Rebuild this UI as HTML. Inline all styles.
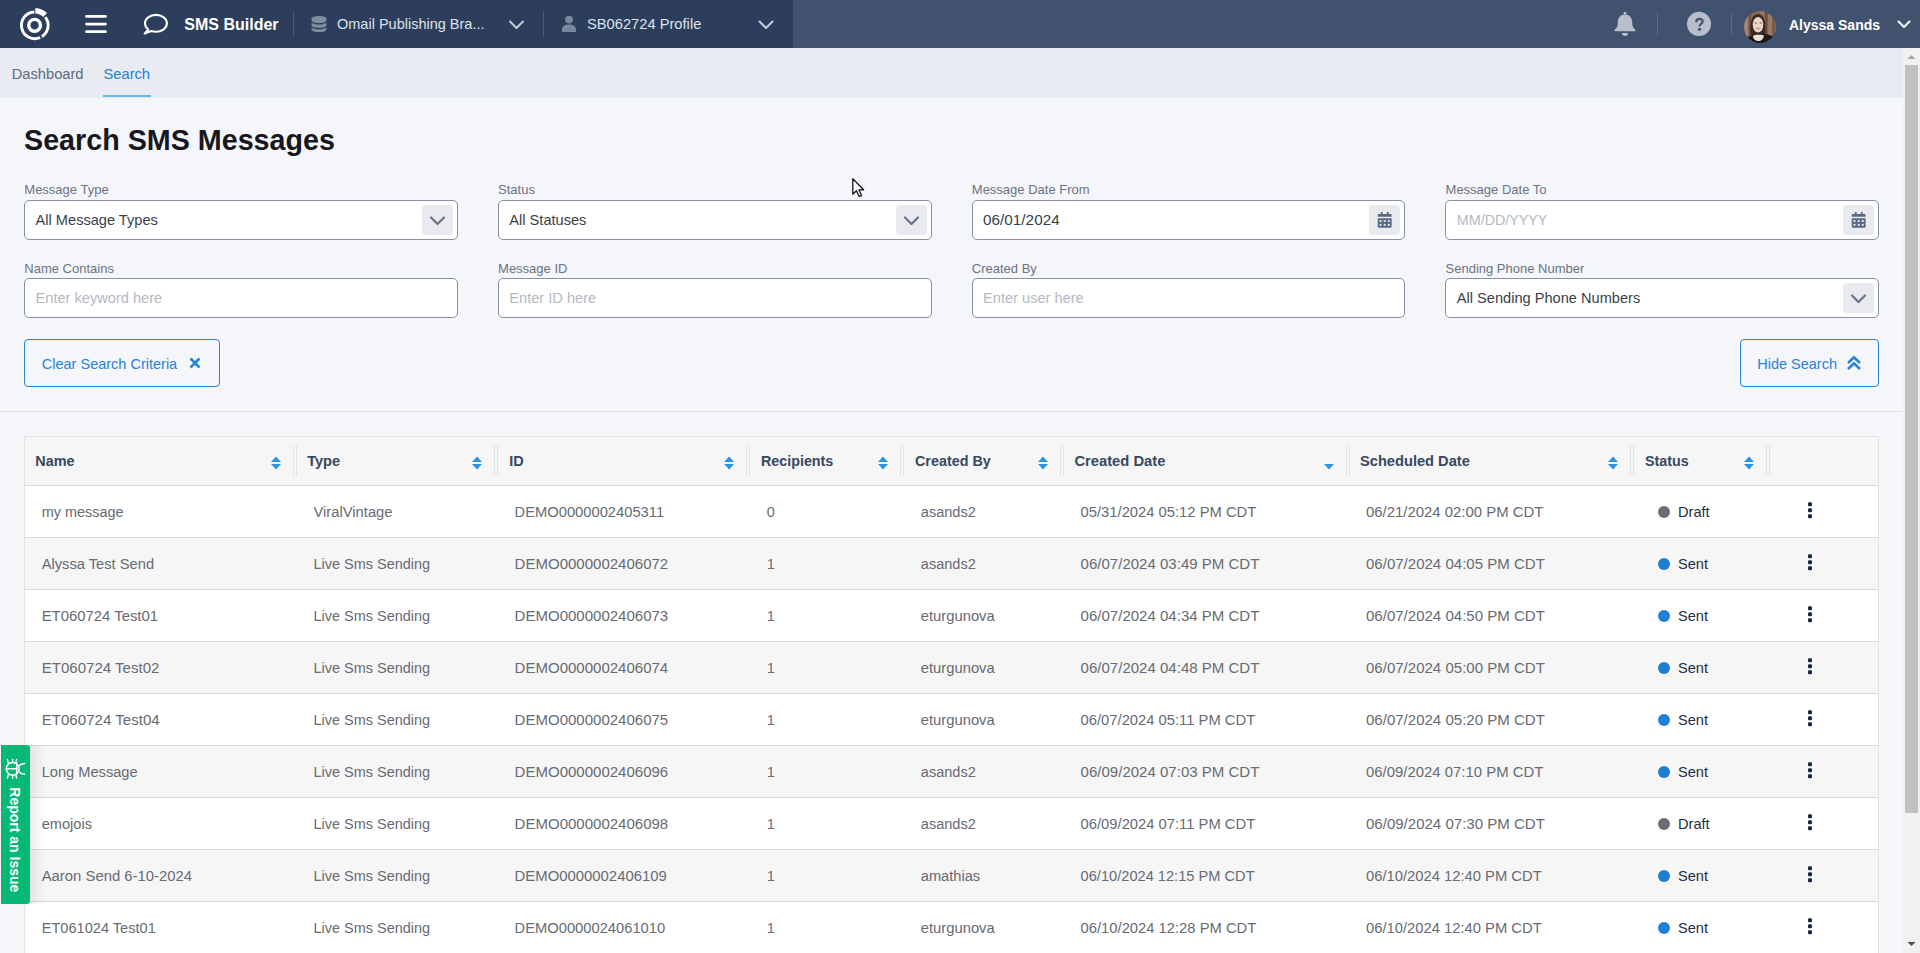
<!DOCTYPE html><html><head><meta charset="utf-8"><style>
*{box-sizing:border-box;margin:0;padding:0}
html,body{width:1920px;height:953px;overflow:hidden;background:#f5f6fa;font-family:"Liberation Sans",sans-serif}
.tx{position:absolute;white-space:nowrap;line-height:1}
.bx{position:absolute}
svg{position:absolute;overflow:visible}
</style></head><body>
<div class="bx" style="left:0;top:0;width:1920px;height:48px;background:#41526f"></div>
<div class="bx" style="left:0;top:0;width:793px;height:48px;background:#2c3e5c"></div>
<svg width="1920" height="48" style="left:0;top:0"><path d="M40.23,37.50 A13.35,13.35 0 1 1 34.33,11.96" stroke="#fff" stroke-width="2.9" fill="none"/><path d="M45.32,17.08 A13.35,13.35 0 0 1 41.87,36.62" stroke="#fff" stroke-width="2.9" fill="none"/><path d="M35.31,10.71 A14.6,14.6 0 0 1 45.12,14.98" stroke="#fff" stroke-width="5.4" fill="none"/><circle cx="34.599999999999994" cy="25.3" r="5.9" stroke="#fff" stroke-width="3.4" fill="none"/><g stroke="#fff" stroke-width="2.7" stroke-linecap="round"><line x1="86.5" y1="16.4" x2="105.5" y2="16.4"/><line x1="86.5" y1="24.1" x2="105.5" y2="24.1"/><line x1="86.5" y1="31.7" x2="105.5" y2="31.7"/></g><path d="M151.3,31.1 C152.7,31.6 154.2,31.8 155.95,31.8 C162,31.8 166.9,28.1 166.9,23.35 C166.9,18.6 162,14.9 155.95,14.9 C149.9,14.9 145,18.6 145,23.35 C145,25.8 146.2,27.9 148.2,29.5 L144.6,33.6 Z" stroke="#fff" stroke-width="2.1" fill="none" stroke-linejoin="round"/><rect x="293" y="12" width="1" height="24" fill="#4a5b77"/><rect x="543" y="12" width="1" height="24" fill="#4a5b77"/><rect x="1657" y="12" width="1" height="24" fill="#5a6a85"/><rect x="1731" y="12" width="1" height="24" fill="#5a6a85"/><g fill="#7f8ca2"><path d="M311.6,18.6 C311.6,16.9 314.9,16 319,16 C323.1,16 326.4,16.9 326.4,18.6 L326.4,20.6 C326.4,22.3 323.1,23.2 319,23.2 C314.9,23.2 311.6,22.3 311.6,20.6 Z"/><path d="M311.6,22.6 C313,24 316,24.6 319,24.6 C322,24.6 325,24 326.4,22.6 L326.4,25.3 C326.4,27 323.1,27.9 319,27.9 C314.9,27.9 311.6,27 311.6,25.3 Z"/><path d="M311.6,27.3 C313,28.7 316,29.3 319,29.3 C322,29.3 325,28.7 326.4,27.3 L326.4,29.4 C326.4,31.1 323.1,32 319,32 C314.9,32 311.6,31.1 311.6,29.4 Z"/></g><g fill="#7a879c"><circle cx="569" cy="19.6" r="3.9"/><path d="M562,32 L562,29.6 C562,26.4 564.8,24.6 569,24.6 C573.2,24.6 576,26.4 576,29.6 L576,32 Z"/></g><g stroke="#c5ccd8" stroke-width="2" fill="none" stroke-linecap="round" stroke-linejoin="round"><polyline points="510,21.5 516.5,28 523,21.5"/><polyline points="759.5,21.5 766,28 772.5,21.5"/></g><polyline points="1898.5,21.5 1904,27 1909.5,21.5" stroke="#fff" stroke-width="2" fill="none" stroke-linecap="round" stroke-linejoin="round"/><g fill="#b9c0cc"><circle cx="1625" cy="13.3" r="1.5"/><path d="M1625,14.6 C1629.5,14.6 1632,17.8 1632.2,22 L1632.4,25 C1632.6,27 1634,28.5 1635.2,29.6 C1635.8,30.3 1635.4,31.3 1634.5,31.3 L1615.5,31.3 C1614.6,31.3 1614.2,30.3 1614.8,29.6 C1616,28.5 1617.4,27 1617.6,25 L1617.8,22 C1618,17.8 1620.5,14.6 1625,14.6 Z"/><path d="M1621.9,33 L1628.1,33 C1628.1,34.8 1626.8,35.9 1625,35.9 C1623.2,35.9 1621.9,34.8 1621.9,33 Z"/></g><circle cx="1699" cy="23.9" r="12.05" fill="#b8bfcb"/><path d="M1696.2,22.2 C1696.2,20.1 1697.6,18.9 1699.4,18.9 C1701.3,18.9 1702.7,20 1702.7,21.6 C1702.7,23.6 1699.6,24 1699.6,26.3" stroke="#43536f" stroke-width="2.2" fill="none"/><circle cx="1699.5" cy="29.3" r="1.6" fill="#43536f"/></svg>
<svg width="32" height="32" style="left:1744px;top:10.75px" viewBox="0 0 32 32"><defs><clipPath id="av"><circle cx="16" cy="16" r="16"/></clipPath><filter id="bl" x="-10%" y="-10%" width="120%" height="120%"><feGaussianBlur stdDeviation="0.55"/></filter></defs><g clip-path="url(#av)"><g filter="url(#bl)"><rect x="-2" y="-2" width="36" height="36" fill="#8a6b57"/><rect x="0" y="-2" width="4" height="36" fill="#a38572"/><rect x="5" y="-2" width="2" height="36" fill="#6f5343"/><rect x="16" y="-2" width="4" height="36" fill="#95735e"/><rect x="21" y="-2" width="2.5" height="36" fill="#6b4f3f"/><rect x="24" y="-2" width="4" height="36" fill="#9a7864"/><rect x="28.5" y="-2" width="2" height="36" fill="#74574a"/><path d="M6.8,25 C6,14 6.5,3.2 14,3.2 C21.5,3.2 22,14 21,25 Z" fill="#3a2722"/><ellipse cx="14" cy="13.8" rx="5.3" ry="7.8" fill="#e6d6c6"/><ellipse cx="11.8" cy="12" rx="1.2" ry="0.8" fill="#8a6f70"/><ellipse cx="16.6" cy="12" rx="1.2" ry="0.8" fill="#8a6f70"/><ellipse cx="14" cy="17.6" rx="2.6" ry="1" fill="#c89a98"/><path d="M-2,34 L-2,27 C1,26 4,25.6 7,25.2 L9,24.6 L19.8,22.8 C23,23.2 27,24.5 32,26.5 L34,34 Z" fill="#1b1818"/><path d="M8.8,25.2 C10,24.2 12,23.8 14,23.8 C16,23.8 18.5,23.8 19.9,24.4 C19.5,28 17,30 14.4,30 C11.5,30 9.3,28 8.8,25.2 Z" fill="#e9e2cf"/></g></g></svg>
<div class="tx" style="left:184.30px;top:16.76px;font-size:16px;color:#ffffff;font-weight:700;">SMS Builder</div>
<div class="tx" style="left:337.00px;top:16.93px;font-size:14.5px;color:#dce2ea;font-weight:400;">Omail Publishing Bra...</div>
<div class="tx" style="left:587.00px;top:17.16px;font-size:14.7px;color:#dce2ea;font-weight:400;">SB062724 Profile</div>
<div class="tx" style="left:1789.00px;top:18.25px;font-size:14px;color:#ffffff;font-weight:700;">Alyssa Sands</div>
<div class="bx" style="left:0;top:48px;width:1903px;height:50px;background:#e8ebf2"></div>
<div class="tx" style="left:11.70px;top:67.16px;font-size:14.7px;color:#5f6b80;font-weight:400;">Dashboard</div>
<div class="tx" style="left:103.50px;top:67.16px;font-size:14.7px;color:#2280d4;font-weight:400;">Search</div>
<div class="bx" style="left:103px;top:95px;width:48px;height:2px;background:#5fbdf5"></div>
<div class="tx" style="left:24.00px;top:125.71px;font-size:28.7px;color:#16181d;font-weight:700;">Search SMS Messages</div>
<div class="tx" style="left:24.30px;top:183.00px;font-size:13px;color:#6b7384;font-weight:400;">Message Type</div>
<div class="bx" style="left:24px;top:200px;width:433.75px;height:40px;background:#fff;border:1px solid #8791a1;border-radius:5px"><div class="bx" style="right:4px;top:4px;width:31px;height:30px;background:#e9eaed;border-radius:4px"></div><svg width="31" height="30" style="right:4px;top:4px;position:absolute"><polyline points="9,12.5 15.5,19 22,12.5" stroke="#67758c" stroke-width="2.2" fill="none" stroke-linecap="round" stroke-linejoin="round"/></svg></div>
<div class="tx" style="left:35.60px;top:212.64px;font-size:14.6px;color:#3a3f4a;font-weight:400;">All Message Types</div>
<div class="tx" style="left:498.05px;top:183.00px;font-size:13px;color:#6b7384;font-weight:400;">Status</div>
<div class="bx" style="left:497.75px;top:200px;width:433.75px;height:40px;background:#fff;border:1px solid #8791a1;border-radius:5px"><div class="bx" style="right:4px;top:4px;width:31px;height:30px;background:#e9eaed;border-radius:4px"></div><svg width="31" height="30" style="right:4px;top:4px;position:absolute"><polyline points="9,12.5 15.5,19 22,12.5" stroke="#67758c" stroke-width="2.2" fill="none" stroke-linecap="round" stroke-linejoin="round"/></svg></div>
<div class="tx" style="left:509.35px;top:212.64px;font-size:14.6px;color:#3a3f4a;font-weight:400;">All Statuses</div>
<div class="tx" style="left:971.80px;top:183.00px;font-size:13px;color:#6b7384;font-weight:400;">Message Date From</div>
<div class="bx" style="left:971.5px;top:200px;width:433.75px;height:40px;background:#fff;border:1px solid #8791a1;border-radius:5px"><div class="bx" style="right:4px;top:4px;width:31px;height:30px;background:#e9eaed;border-radius:4px"></div><svg width="31" height="30" style="right:4px;top:4px;position:absolute"><g fill="#586a86"><path d="M8.75,11.7 V10.4 C8.75,9.6 9.3,9.1 10.1,9.1 H21.3 C22.1,9.1 22.65,9.6 22.65,10.4 V11.7 Z"/><rect x="11.85" y="7" width="1.8" height="2.6"/><rect x="17.85" y="7" width="1.8" height="2.6"/><path d="M8.75,13.2 H22.65 V21.5 C22.65,22.3 22.1,22.8 21.3,22.8 H10.1 C9.3,22.8 8.75,22.3 8.75,21.5 Z"/></g><g fill="#e9eaed"><rect x="10.55" y="15.1" width="1.9" height="1.9"/><rect x="14.75" y="15.1" width="1.9" height="1.9"/><rect x="18.85" y="15.1" width="1.9" height="1.9"/><rect x="10.55" y="18.9" width="1.9" height="1.9"/><rect x="14.75" y="18.9" width="1.9" height="1.9"/><rect x="18.85" y="18.9" width="1.9" height="1.9"/></g></svg></div>
<div class="tx" style="left:983.10px;top:212.05px;font-size:15.3px;color:#3a3f4a;font-weight:400;">06/01/2024</div>
<div class="tx" style="left:1445.55px;top:183.00px;font-size:13px;color:#6b7384;font-weight:400;">Message Date To</div>
<div class="bx" style="left:1445.25px;top:200px;width:433.75px;height:40px;background:#fff;border:1px solid #8791a1;border-radius:5px"><div class="bx" style="right:4px;top:4px;width:31px;height:30px;background:#e9eaed;border-radius:4px"></div><svg width="31" height="30" style="right:4px;top:4px;position:absolute"><g fill="#586a86"><path d="M8.75,11.7 V10.4 C8.75,9.6 9.3,9.1 10.1,9.1 H21.3 C22.1,9.1 22.65,9.6 22.65,10.4 V11.7 Z"/><rect x="11.85" y="7" width="1.8" height="2.6"/><rect x="17.85" y="7" width="1.8" height="2.6"/><path d="M8.75,13.2 H22.65 V21.5 C22.65,22.3 22.1,22.8 21.3,22.8 H10.1 C9.3,22.8 8.75,22.3 8.75,21.5 Z"/></g><g fill="#e9eaed"><rect x="10.55" y="15.1" width="1.9" height="1.9"/><rect x="14.75" y="15.1" width="1.9" height="1.9"/><rect x="18.85" y="15.1" width="1.9" height="1.9"/><rect x="10.55" y="18.9" width="1.9" height="1.9"/><rect x="14.75" y="18.9" width="1.9" height="1.9"/><rect x="18.85" y="18.9" width="1.9" height="1.9"/></g></svg></div>
<div class="tx" style="left:1456.85px;top:212.90px;font-size:14.3px;color:#b3b9c4;font-weight:400;">MM/DD/YYYY</div>
<div class="tx" style="left:24.30px;top:262.00px;font-size:13px;color:#6b7384;font-weight:400;">Name Contains</div>
<div class="bx" style="left:24px;top:278px;width:433.75px;height:40px;background:#fff;border:1px solid #8791a1;border-radius:5px"></div>
<div class="tx" style="left:35.60px;top:291.44px;font-size:14.6px;color:#b3b9c4;font-weight:400;">Enter keyword here</div>
<div class="tx" style="left:498.05px;top:262.00px;font-size:13px;color:#6b7384;font-weight:400;">Message ID</div>
<div class="bx" style="left:497.75px;top:278px;width:433.75px;height:40px;background:#fff;border:1px solid #8791a1;border-radius:5px"></div>
<div class="tx" style="left:509.35px;top:291.44px;font-size:14.6px;color:#b3b9c4;font-weight:400;">Enter ID here</div>
<div class="tx" style="left:971.80px;top:262.00px;font-size:13px;color:#6b7384;font-weight:400;">Created By</div>
<div class="bx" style="left:971.5px;top:278px;width:433.75px;height:40px;background:#fff;border:1px solid #8791a1;border-radius:5px"></div>
<div class="tx" style="left:983.10px;top:291.44px;font-size:14.6px;color:#b3b9c4;font-weight:400;">Enter user here</div>
<div class="tx" style="left:1445.55px;top:262.00px;font-size:13px;color:#6b7384;font-weight:400;">Sending Phone Number</div>
<div class="bx" style="left:1445.25px;top:278px;width:433.75px;height:40px;background:#fff;border:1px solid #8791a1;border-radius:5px"><div class="bx" style="right:4px;top:4px;width:31px;height:30px;background:#e9eaed;border-radius:4px"></div><svg width="31" height="30" style="right:4px;top:4px;position:absolute"><polyline points="9,12.5 15.5,19 22,12.5" stroke="#67758c" stroke-width="2.2" fill="none" stroke-linecap="round" stroke-linejoin="round"/></svg></div>
<div class="tx" style="left:1456.85px;top:291.44px;font-size:14.6px;color:#3a3f4a;font-weight:400;">All Sending Phone Numbers</div>
<div class="bx" style="left:24px;top:339px;width:196px;height:48px;border:1.5px solid #2a82d4;border-radius:4px"></div>
<div class="tx" style="left:41.80px;top:356.73px;font-size:14.5px;color:#2a82d4;font-weight:400;">Clear Search Criteria</div>
<svg width="12" height="12" style="left:189px;top:357px"><g stroke="#2a82d4" stroke-width="2.6" stroke-linecap="butt"><line x1="1.5" y1="1.5" x2="10.5" y2="10.5"/><line x1="10.5" y1="1.5" x2="1.5" y2="10.5"/></g></svg>
<div class="bx" style="left:1740px;top:339px;width:139px;height:48px;border:1.5px solid #2a82d4;border-radius:4px"></div>
<div class="tx" style="left:1757.20px;top:357.23px;font-size:14.5px;color:#2a82d4;font-weight:400;">Hide Search</div>
<svg width="16" height="16" style="left:1846px;top:355px"><g stroke="#2a82d4" stroke-width="2.6" fill="none" stroke-linecap="butt" stroke-linejoin="miter"><polyline points="2,8 8,2.2 14,8"/><polyline points="2,14 8,8.2 14,14"/></g></svg>
<div class="bx" style="left:0;top:411px;width:1903px;height:1px;background:#dfe0e3"></div>
<svg width="16" height="22" style="left:852px;top:178px" viewBox="0 0 16 22"><path d="M0.8,0.8 L0.8,16.2 L4.4,12.8 L7.3,18.6 L9.6,17.5 L6.9,11.8 L11.6,11.8 Z" fill="#fff" stroke="#14161a" stroke-width="1.3" stroke-linejoin="round"/></svg>
<div class="bx" style="left:24px;top:436px;width:1855px;height:527px;border:1px solid #e3e3e3;background:#fff"></div>
<div class="bx" style="left:25px;top:437px;width:1853px;height:48px;background:#f6f6f6"></div>
<div class="bx" style="left:25px;top:485px;width:1853px;height:1px;background:#d9d9d9"></div>
<div class="tx" style="left:35.30px;top:453.91px;font-size:14.4px;color:#374861;font-weight:700;">Name</div>
<div class="tx" style="left:307.20px;top:453.78px;font-size:14.55px;color:#374861;font-weight:700;">Type</div>
<div class="tx" style="left:509.30px;top:453.83px;font-size:14.5px;color:#374861;font-weight:700;">ID</div>
<div class="tx" style="left:761.00px;top:454.00px;font-size:14.3px;color:#374861;font-weight:700;">Recipients</div>
<div class="tx" style="left:915.00px;top:453.95px;font-size:14.35px;color:#374861;font-weight:700;">Created By</div>
<div class="tx" style="left:1074.40px;top:453.61px;font-size:14.75px;color:#374861;font-weight:700;">Created Date</div>
<div class="tx" style="left:1360.00px;top:453.70px;font-size:14.65px;color:#374861;font-weight:700;">Scheduled Date</div>
<div class="tx" style="left:1645.00px;top:454.00px;font-size:14.3px;color:#374861;font-weight:700;">Status</div>
<div class="bx" style="left:25px;top:537px;width:1853px;height:1px;background:#dadada"></div>
<div class="tx" style="left:41.70px;top:504.77px;font-size:14.46px;color:#676b73;font-weight:400;">my message</div>
<div class="tx" style="left:313.50px;top:504.62px;font-size:14.75px;color:#676b73;font-weight:400;">ViralVintage</div>
<div class="tx" style="left:514.60px;top:504.63px;font-size:14.73px;color:#676b73;font-weight:400;">DEMO0000002405311</div>
<div class="tx" style="left:766.70px;top:504.75px;font-size:14.5px;color:#676b73;font-weight:400;">0</div>
<div class="tx" style="left:920.80px;top:504.72px;font-size:14.56px;color:#676b73;font-weight:400;">asands2</div>
<div class="tx" style="left:1080.60px;top:504.62px;font-size:14.77px;color:#676b73;font-weight:400;">05/31/2024 05:12 PM CDT</div>
<div class="tx" style="left:1366.00px;top:504.55px;font-size:14.91px;color:#676b73;font-weight:400;">06/21/2024 02:00 PM CDT</div>
<div class="tx" style="left:1678.00px;top:504.70px;font-size:14.6px;color:#1d2c47;font-weight:400;">Draft</div>
<div class="bx" style="left:25px;top:538px;width:1853px;height:51px;background:#f6f6f6"></div>
<div class="bx" style="left:25px;top:589px;width:1853px;height:1px;background:#dadada"></div>
<div class="tx" style="left:41.70px;top:556.65px;font-size:14.7px;color:#676b73;font-weight:400;">Alyssa Test Send</div>
<div class="tx" style="left:313.50px;top:556.76px;font-size:14.47px;color:#676b73;font-weight:400;">Live Sms Sending</div>
<div class="tx" style="left:514.60px;top:555.99px;font-size:15.02px;color:#676b73;font-weight:400;">DEMO0000002406072</div>
<div class="tx" style="left:766.70px;top:556.75px;font-size:14.5px;color:#676b73;font-weight:400;">1</div>
<div class="tx" style="left:920.80px;top:556.72px;font-size:14.56px;color:#676b73;font-weight:400;">asands2</div>
<div class="tx" style="left:1080.60px;top:555.98px;font-size:15.04px;color:#676b73;font-weight:400;">06/07/2024 03:49 PM CDT</div>
<div class="tx" style="left:1366.00px;top:555.98px;font-size:15.04px;color:#676b73;font-weight:400;">06/07/2024 04:05 PM CDT</div>
<div class="tx" style="left:1678.00px;top:556.70px;font-size:14.6px;color:#1d2c47;font-weight:400;">Sent</div>
<div class="bx" style="left:25px;top:641px;width:1853px;height:1px;background:#dadada"></div>
<div class="tx" style="left:41.70px;top:608.56px;font-size:14.88px;color:#676b73;font-weight:400;">ET060724 Test01</div>
<div class="tx" style="left:313.50px;top:608.76px;font-size:14.47px;color:#676b73;font-weight:400;">Live Sms Sending</div>
<div class="tx" style="left:514.60px;top:607.99px;font-size:15.02px;color:#676b73;font-weight:400;">DEMO0000002406073</div>
<div class="tx" style="left:766.70px;top:608.75px;font-size:14.5px;color:#676b73;font-weight:400;">1</div>
<div class="tx" style="left:920.80px;top:608.61px;font-size:14.78px;color:#676b73;font-weight:400;">eturgunova</div>
<div class="tx" style="left:1080.60px;top:607.98px;font-size:15.04px;color:#676b73;font-weight:400;">06/07/2024 04:34 PM CDT</div>
<div class="tx" style="left:1366.00px;top:607.98px;font-size:15.04px;color:#676b73;font-weight:400;">06/07/2024 04:50 PM CDT</div>
<div class="tx" style="left:1678.00px;top:608.70px;font-size:14.6px;color:#1d2c47;font-weight:400;">Sent</div>
<div class="bx" style="left:25px;top:642px;width:1853px;height:51px;background:#f6f6f6"></div>
<div class="bx" style="left:25px;top:693px;width:1853px;height:1px;background:#dadada"></div>
<div class="tx" style="left:41.70px;top:659.98px;font-size:15.05px;color:#676b73;font-weight:400;">ET060724 Test02</div>
<div class="tx" style="left:313.50px;top:660.76px;font-size:14.47px;color:#676b73;font-weight:400;">Live Sms Sending</div>
<div class="tx" style="left:514.60px;top:659.99px;font-size:15.02px;color:#676b73;font-weight:400;">DEMO0000002406074</div>
<div class="tx" style="left:766.70px;top:660.75px;font-size:14.5px;color:#676b73;font-weight:400;">1</div>
<div class="tx" style="left:920.80px;top:660.61px;font-size:14.78px;color:#676b73;font-weight:400;">eturgunova</div>
<div class="tx" style="left:1080.60px;top:659.98px;font-size:15.04px;color:#676b73;font-weight:400;">06/07/2024 04:48 PM CDT</div>
<div class="tx" style="left:1366.00px;top:659.98px;font-size:15.04px;color:#676b73;font-weight:400;">06/07/2024 05:00 PM CDT</div>
<div class="tx" style="left:1678.00px;top:660.70px;font-size:14.6px;color:#1d2c47;font-weight:400;">Sent</div>
<div class="bx" style="left:25px;top:745px;width:1853px;height:1px;background:#dadada"></div>
<div class="tx" style="left:41.70px;top:711.95px;font-size:15.1px;color:#676b73;font-weight:400;">ET060724 Test04</div>
<div class="tx" style="left:313.50px;top:712.76px;font-size:14.47px;color:#676b73;font-weight:400;">Live Sms Sending</div>
<div class="tx" style="left:514.60px;top:711.99px;font-size:15.02px;color:#676b73;font-weight:400;">DEMO0000002406075</div>
<div class="tx" style="left:766.70px;top:712.75px;font-size:14.5px;color:#676b73;font-weight:400;">1</div>
<div class="tx" style="left:920.80px;top:712.61px;font-size:14.78px;color:#676b73;font-weight:400;">eturgunova</div>
<div class="tx" style="left:1080.60px;top:712.62px;font-size:14.77px;color:#676b73;font-weight:400;">06/07/2024 05:11 PM CDT</div>
<div class="tx" style="left:1366.00px;top:711.98px;font-size:15.04px;color:#676b73;font-weight:400;">06/07/2024 05:20 PM CDT</div>
<div class="tx" style="left:1678.00px;top:712.70px;font-size:14.6px;color:#1d2c47;font-weight:400;">Sent</div>
<div class="bx" style="left:25px;top:746px;width:1853px;height:51px;background:#f6f6f6"></div>
<div class="bx" style="left:25px;top:797px;width:1853px;height:1px;background:#dadada"></div>
<div class="tx" style="left:41.70px;top:764.68px;font-size:14.64px;color:#676b73;font-weight:400;">Long Message</div>
<div class="tx" style="left:313.50px;top:764.76px;font-size:14.47px;color:#676b73;font-weight:400;">Live Sms Sending</div>
<div class="tx" style="left:514.60px;top:763.99px;font-size:15.02px;color:#676b73;font-weight:400;">DEMO0000002406096</div>
<div class="tx" style="left:766.70px;top:764.75px;font-size:14.5px;color:#676b73;font-weight:400;">1</div>
<div class="tx" style="left:920.80px;top:764.72px;font-size:14.56px;color:#676b73;font-weight:400;">asands2</div>
<div class="tx" style="left:1080.60px;top:763.98px;font-size:15.04px;color:#676b73;font-weight:400;">06/09/2024 07:03 PM CDT</div>
<div class="tx" style="left:1366.00px;top:764.54px;font-size:14.91px;color:#676b73;font-weight:400;">06/09/2024 07:10 PM CDT</div>
<div class="tx" style="left:1678.00px;top:764.70px;font-size:14.6px;color:#1d2c47;font-weight:400;">Sent</div>
<div class="bx" style="left:25px;top:849px;width:1853px;height:1px;background:#dadada"></div>
<div class="tx" style="left:41.70px;top:816.70px;font-size:14.6px;color:#676b73;font-weight:400;">emojois</div>
<div class="tx" style="left:313.50px;top:816.76px;font-size:14.47px;color:#676b73;font-weight:400;">Live Sms Sending</div>
<div class="tx" style="left:514.60px;top:815.99px;font-size:15.02px;color:#676b73;font-weight:400;">DEMO0000002406098</div>
<div class="tx" style="left:766.70px;top:816.75px;font-size:14.5px;color:#676b73;font-weight:400;">1</div>
<div class="tx" style="left:920.80px;top:816.72px;font-size:14.56px;color:#676b73;font-weight:400;">asands2</div>
<div class="tx" style="left:1080.60px;top:816.62px;font-size:14.77px;color:#676b73;font-weight:400;">06/09/2024 07:11 PM CDT</div>
<div class="tx" style="left:1366.00px;top:815.98px;font-size:15.04px;color:#676b73;font-weight:400;">06/09/2024 07:30 PM CDT</div>
<div class="tx" style="left:1678.00px;top:816.70px;font-size:14.6px;color:#1d2c47;font-weight:400;">Draft</div>
<div class="bx" style="left:25px;top:850px;width:1853px;height:51px;background:#f6f6f6"></div>
<div class="bx" style="left:25px;top:901px;width:1853px;height:1px;background:#dadada"></div>
<div class="tx" style="left:41.70px;top:868.57px;font-size:14.87px;color:#676b73;font-weight:400;">Aaron Send 6-10-2024</div>
<div class="tx" style="left:313.50px;top:868.76px;font-size:14.47px;color:#676b73;font-weight:400;">Live Sms Sending</div>
<div class="tx" style="left:514.60px;top:868.56px;font-size:14.88px;color:#676b73;font-weight:400;">DEMO0000002406109</div>
<div class="tx" style="left:766.70px;top:868.75px;font-size:14.5px;color:#676b73;font-weight:400;">1</div>
<div class="tx" style="left:920.80px;top:868.68px;font-size:14.64px;color:#676b73;font-weight:400;">amathias</div>
<div class="tx" style="left:1080.60px;top:868.68px;font-size:14.64px;color:#676b73;font-weight:400;">06/10/2024 12:15 PM CDT</div>
<div class="tx" style="left:1366.00px;top:868.62px;font-size:14.77px;color:#676b73;font-weight:400;">06/10/2024 12:40 PM CDT</div>
<div class="tx" style="left:1678.00px;top:868.70px;font-size:14.6px;color:#1d2c47;font-weight:400;">Sent</div>
<div class="bx" style="left:25px;top:953px;width:1853px;height:1px;background:#dadada"></div>
<div class="tx" style="left:41.70px;top:920.70px;font-size:14.6px;color:#676b73;font-weight:400;">ET061024 Test01</div>
<div class="tx" style="left:313.50px;top:920.76px;font-size:14.47px;color:#676b73;font-weight:400;">Live Sms Sending</div>
<div class="tx" style="left:514.60px;top:920.63px;font-size:14.73px;color:#676b73;font-weight:400;">DEMO0000024061010</div>
<div class="tx" style="left:766.70px;top:920.75px;font-size:14.5px;color:#676b73;font-weight:400;">1</div>
<div class="tx" style="left:920.80px;top:920.61px;font-size:14.78px;color:#676b73;font-weight:400;">eturgunova</div>
<div class="tx" style="left:1080.60px;top:920.62px;font-size:14.77px;color:#676b73;font-weight:400;">06/10/2024 12:28 PM CDT</div>
<div class="tx" style="left:1366.00px;top:920.62px;font-size:14.77px;color:#676b73;font-weight:400;">06/10/2024 12:40 PM CDT</div>
<div class="tx" style="left:1678.00px;top:920.70px;font-size:14.6px;color:#1d2c47;font-weight:400;">Sent</div>
<svg width="1920" height="953" style="left:0;top:0"><path d="M271,462 L276,456.6 L281,462 Z M271,464 L276,469.6 L281,464 Z" fill="#2a94e2"/><path d="M472,462 L477,456.6 L482,462 Z M472,464 L477,469.6 L482,464 Z" fill="#2a94e2"/><path d="M724.1,462 L729.1,456.6 L734.1,462 Z M724.1,464 L729.1,469.6 L734.1,464 Z" fill="#2a94e2"/><path d="M878,462 L883,456.6 L888,462 Z M878,464 L883,469.6 L888,464 Z" fill="#2a94e2"/><path d="M1038,462 L1043,456.6 L1048,462 Z M1038,464 L1043,469.6 L1048,464 Z" fill="#2a94e2"/><path d="M1324,464 L1329,469.6 L1334,464 Z" fill="#2a94e2"/><path d="M1608,462 L1613,456.6 L1618,462 Z M1608,464 L1613,469.6 L1618,464 Z" fill="#2a94e2"/><path d="M1744,462 L1749,456.6 L1754,462 Z M1744,464 L1749,469.6 L1754,464 Z" fill="#2a94e2"/><rect x="293" y="445" width="1" height="31.5" fill="#e2e4e8"/><rect x="296" y="445" width="1" height="31.5" fill="#e2e4e8"/><rect x="494" y="445" width="1" height="31.5" fill="#e2e4e8"/><rect x="497" y="445" width="1" height="31.5" fill="#e2e4e8"/><rect x="746" y="445" width="1" height="31.5" fill="#e2e4e8"/><rect x="749" y="445" width="1" height="31.5" fill="#e2e4e8"/><rect x="900" y="445" width="1" height="31.5" fill="#e2e4e8"/><rect x="903" y="445" width="1" height="31.5" fill="#e2e4e8"/><rect x="1060" y="445" width="1" height="31.5" fill="#e2e4e8"/><rect x="1063" y="445" width="1" height="31.5" fill="#e2e4e8"/><rect x="1346" y="445" width="1" height="31.5" fill="#e2e4e8"/><rect x="1349" y="445" width="1" height="31.5" fill="#e2e4e8"/><rect x="1630" y="445" width="1" height="31.5" fill="#e2e4e8"/><rect x="1633" y="445" width="1" height="31.5" fill="#e2e4e8"/><rect x="1766" y="445" width="1" height="31.5" fill="#e2e4e8"/><rect x="1769" y="445" width="1" height="31.5" fill="#e2e4e8"/><circle cx="1664" cy="512" r="6" fill="#6b6e72"/><rect x="1808" y="502.2" width="4" height="4" rx="1.2" fill="#172641"/><rect x="1808" y="508.2" width="4" height="4" rx="1.2" fill="#172641"/><rect x="1808" y="514.2" width="4" height="4" rx="1.2" fill="#172641"/><circle cx="1664" cy="564" r="6" fill="#1f7fd6"/><rect x="1808" y="554.2" width="4" height="4" rx="1.2" fill="#172641"/><rect x="1808" y="560.2" width="4" height="4" rx="1.2" fill="#172641"/><rect x="1808" y="566.2" width="4" height="4" rx="1.2" fill="#172641"/><circle cx="1664" cy="616" r="6" fill="#1f7fd6"/><rect x="1808" y="606.2" width="4" height="4" rx="1.2" fill="#172641"/><rect x="1808" y="612.2" width="4" height="4" rx="1.2" fill="#172641"/><rect x="1808" y="618.2" width="4" height="4" rx="1.2" fill="#172641"/><circle cx="1664" cy="668" r="6" fill="#1f7fd6"/><rect x="1808" y="658.2" width="4" height="4" rx="1.2" fill="#172641"/><rect x="1808" y="664.2" width="4" height="4" rx="1.2" fill="#172641"/><rect x="1808" y="670.2" width="4" height="4" rx="1.2" fill="#172641"/><circle cx="1664" cy="720" r="6" fill="#1f7fd6"/><rect x="1808" y="710.2" width="4" height="4" rx="1.2" fill="#172641"/><rect x="1808" y="716.2" width="4" height="4" rx="1.2" fill="#172641"/><rect x="1808" y="722.2" width="4" height="4" rx="1.2" fill="#172641"/><circle cx="1664" cy="772" r="6" fill="#1f7fd6"/><rect x="1808" y="762.2" width="4" height="4" rx="1.2" fill="#172641"/><rect x="1808" y="768.2" width="4" height="4" rx="1.2" fill="#172641"/><rect x="1808" y="774.2" width="4" height="4" rx="1.2" fill="#172641"/><circle cx="1664" cy="824" r="6" fill="#6b6e72"/><rect x="1808" y="814.2" width="4" height="4" rx="1.2" fill="#172641"/><rect x="1808" y="820.2" width="4" height="4" rx="1.2" fill="#172641"/><rect x="1808" y="826.2" width="4" height="4" rx="1.2" fill="#172641"/><circle cx="1664" cy="876" r="6" fill="#1f7fd6"/><rect x="1808" y="866.2" width="4" height="4" rx="1.2" fill="#172641"/><rect x="1808" y="872.2" width="4" height="4" rx="1.2" fill="#172641"/><rect x="1808" y="878.2" width="4" height="4" rx="1.2" fill="#172641"/><circle cx="1664" cy="928" r="6" fill="#1f7fd6"/><rect x="1808" y="918.2" width="4" height="4" rx="1.2" fill="#172641"/><rect x="1808" y="924.2" width="4" height="4" rx="1.2" fill="#172641"/><rect x="1808" y="930.2" width="4" height="4" rx="1.2" fill="#172641"/></svg>
<div class="bx" style="left:30px;top:745px;width:16px;height:159px;background:linear-gradient(to right,rgba(0,0,0,0.07),rgba(0,0,0,0))"></div>
<div class="bx" style="left:1px;top:745px;width:29px;height:159px;background:#05b975;border-radius:0 3px 3px 0"></div>
<svg width="32" height="32" style="left:0;top:750px" viewBox="0 750 32 32"><g stroke="#fff" stroke-width="1.5" fill="none" stroke-linecap="round"><circle cx="12.7" cy="768.8" r="6.4"/><line x1="6.3" y1="768.8" x2="16.7" y2="768.8"/><line x1="16.7" y1="763.6" x2="16.7" y2="774"/><path d="M19.6,765.6 Q20.8,763.5 24.6,763.4"/><path d="M19.6,772 Q20.8,774.1 24.6,774.2"/><line x1="7.4" y1="759.6" x2="8.4" y2="763"/><line x1="12.6" y1="759.4" x2="12.6" y2="762.4"/><line x1="16.6" y1="759.6" x2="15.9" y2="763"/><line x1="7.4" y1="778" x2="8.4" y2="774.6"/><line x1="12.6" y1="778.2" x2="12.6" y2="775.2"/><line x1="16.6" y1="778" x2="15.9" y2="774.6"/></g></svg>
<div class="tx" style="left:0;top:0;font-size:14px;font-weight:700;color:#fff;transform-origin:0 0;transform:translate(21.6px,787.3px) rotate(90deg)">Report an Issue</div>
<div class="bx" style="left:1903px;top:48px;width:17px;height:905px;background:#f1f1f1"></div>
<div class="bx" style="left:1905px;top:65px;width:13px;height:748px;background:#c1c1c1"></div>
<svg width="17" height="905" style="left:1903px;top:48px"><path d="M4.5,11 L8.5,7 L12.5,11 Z" fill="#a3a3a3"/><path d="M4.5,894 L8.5,898 L12.5,894 Z" fill="#505050"/></svg>
</body></html>
